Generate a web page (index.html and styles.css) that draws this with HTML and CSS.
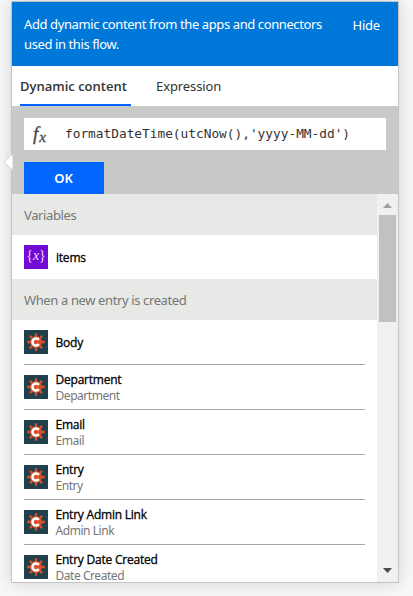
FILE: index.html
```html
<!DOCTYPE html>
<html lang="en">
<head>
<meta charset="utf-8">
<title>Dynamic content</title>
<link rel="stylesheet" href="styles.css">
</head>
<body>
<svg class="defs" width="0" height="0" aria-hidden="true">
  <symbol id="gear" viewBox="0 0 24 24">
    <rect width="24" height="24" fill="#20414b"/>
    <g stroke="#d9502b" stroke-width="2.300">
      <path d="M12 3.200v17.600M3.200 12h17.600M5.900 5.900l12.200 12.200M18.100 5.900L5.900 18.100"/>
    </g>
    <circle cx="12" cy="12" r="6" fill="#d9502b"/>
    <path d="M14.800 9.900A3.500 3.500 0 1 0 14.800 14.100" fill="none" stroke="#fff" stroke-width="2.600"/>
    <path d="M11.500 12h5" stroke="#d9502b" stroke-width="1.600"/>
  </symbol>
</svg>
<main class="panel">
  <svg class="pointer" width="10" height="18" viewBox="0 0 10 18"><path d="M9.500 1L1 9l8.500 8" fill="#fff" stroke="#cfcfcf"/></svg>
  <header class="header">
    <p class="intro">Add dynamic content from the apps and connectors<br>used in this flow.</p>
    <a class="hide">Hide</a>
  </header>
  <nav class="tabs">
    <a class="tab active">Dynamic content</a>
    <a class="tab expression">Expression</a>
  </nav>
  <section class="editor">
    <div class="input"><span class="fx">f<sub>x</sub></span><code>formatDateTime(utcNow(),'yyyy-MM-dd')</code></div>
    <button class="ok">OK</button>
  </section>
  <section class="results">
    <div class="list">
      <h2 class="variables">Variables</h2>
      <div class="variable">
        <span class="var-icon">{<i>x</i>}</span>
        <b>items</b>
      </div>
      <h2>When a new entry is created</h2>
      <div class="row"><svg class="icon"><use href="#gear"/></svg><div class="text"><b>Body</b></div></div>
      <div class="row"><svg class="icon"><use href="#gear"/></svg><div class="text"><b>Department</b><small>Department</small></div></div>
      <div class="row"><svg class="icon"><use href="#gear"/></svg><div class="text"><b>Email</b><small>Email</small></div></div>
      <div class="row"><svg class="icon"><use href="#gear"/></svg><div class="text"><b>Entry</b><small>Entry</small></div></div>
      <div class="row"><svg class="icon"><use href="#gear"/></svg><div class="text"><b>Entry Admin Link</b><small>Admin Link</small></div></div>
      <div class="row"><svg class="icon"><use href="#gear"/></svg><div class="text"><b>Entry Date Created</b><small>Date Created</small></div></div>
    </div>
    <div class="scrollbar">
      <svg class="arrow" width="9" height="5" viewBox="0 0 9 5"><path d="M0 5L4.500 0 9 5z" fill="#a0a0a0"/></svg>
      <div class="thumb"></div>
      <svg class="arrow down" width="9" height="5" viewBox="0 0 9 5"><path d="M0 0L4.500 5 9 0z" fill="#4c4c4c"/></svg>
    </div>
  </section>
</main>
</body>
</html>
```
FILE: styles.css
```css
* { box-sizing: border-box; }
body {
  margin: 0;
  height: 596px;
  overflow: hidden;
  background: #f8f8f8;
  font-family: "Noto Sans", "Open Sans", sans-serif;
}
.defs { position: absolute; }
.panel {
  position: relative;
  width: 388px;
  height: 582px;
  margin: 1px 0 0 11px;
  border: 1px solid #c3c4c3;
  background: #fff;
  box-shadow: 0 0 16px rgba(0, 0, 0, .16);
  display: flex;
  flex-direction: column;
}
.pointer { position: absolute; left: -9px; top: 151px; }
.header {
  height: 64px;
  flex: none;
  padding: 12px 18px 0 12px;
  display: flex;
  justify-content: space-between;
  background: #0078d9;
  color: #fff;
  font-size: 13px;
  line-height: 20px;
  white-space: nowrap;
}
.intro { margin: 0; letter-spacing: -.4px; }
.hide { padding-top: 1px; letter-spacing: -.2px; }
.tabs {
  height: 40px;
  flex: none;
  display: flex;
  padding-left: 8px;
  font-size: 13px;
  line-height: 20px;
  color: #333;
}
.tab { height: 40px; padding-top: 10px; white-space: nowrap; }
.active {
  width: 111px;
  margin-right: 25px;
  border-bottom: 2px solid #0066ff;
  font-family: "Open Sans", sans-serif;
  font-weight: 600;
}
.expression { letter-spacing: -.1px; }
.editor { height: 88px; flex: none; padding: 12px 12px 0; background: #c8cac7; }
.input { display: flex; height: 32px; background: #fff; line-height: 32px; }
.input code { font: 12.8px/31px "DejaVu Sans Mono", monospace; color: #333; white-space: pre; }
.fx { width: 41px; padding-left: 9px; font: italic 19px/31px "Liberation Serif", serif; color: #444; -webkit-text-stroke: .3px #444; }
.fx sub { margin-left: 1px; font-size: 15px; line-height: 0; vertical-align: -2px; }
.ok {
  display: block;
  width: 80px;
  height: 32px;
  margin-top: 12px;
  padding: 0 1px 0 0;
  border: 0;
  background: #0066ff;
  color: #fff;
  font: 600 13px/32px "Noto Sans", sans-serif;
}
.results { display: flex; height: 388px; overflow: hidden; }
.list { width: 365px; flex: none; }
.list h2 {
  height: 41px;
  margin: 0;
  padding: 1px 12px 0;
  background: #e7e9e6;
  color: #767676;
  font-size: 13px;
  font-weight: 400;
  line-height: 41px;
  letter-spacing: -.38px;
}
.variable { display: flex; align-items: center; gap: 8px; height: 44px; padding-left: 12px; }
.variable b { padding-top: 2px; }
.var-icon {
  width: 24px;
  height: 24px;
  background: #7209d4;
  color: #eadcff;
  font: 14px/22px "Liberation Serif", serif;
  text-align: center;
}
.list b {
  font-family: "Open Sans", sans-serif;
  font-size: 12px;
  font-weight: 500;
  line-height: 16px;
  letter-spacing: -.22px;
  color: #000;
  -webkit-text-stroke: .3px #000;
}
.row {
  display: flex;
  align-items: center;
  gap: 8px;
  height: 45px;
  margin: 0 12px;
  border-bottom: 1px solid #a6a6a6;
}
.icon { width: 24px; height: 24px; flex: none; }
.text { display: flex; flex-direction: column; padding-top: 1px; margin-left: -.5px; }
.text small { font-size: 12px; line-height: 16px; letter-spacing: -.45px; color: #767676; }
.scrollbar {
  width: 21px;
  flex: none;
  display: flex;
  flex-direction: column;
  align-items: center;
  background: #f0f0f0;
}
.arrow { margin-top: 9px; flex: none; }
.thumb { width: 17px; height: 107px; margin-top: 7px; background: #c1c1c1; }
.down { margin-top: auto; margin-bottom: 9px; }
```
